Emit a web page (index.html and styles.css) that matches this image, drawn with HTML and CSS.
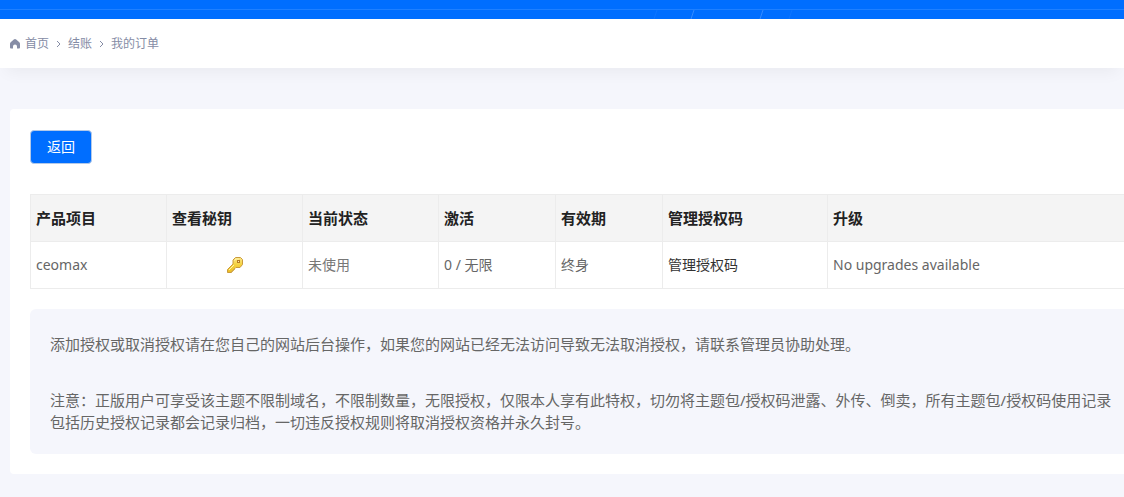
FILE: index.html
```html
<!DOCTYPE html>
<html lang="zh-CN">
<head>
<meta charset="utf-8">
<meta name="viewport" content="width=device-width, initial-scale=1">
<title>我的订单</title>
<link rel="stylesheet" href="styles.css">
</head>
<body>
<header class="banner">
  <svg class="banner-lines" width="160" height="9" viewBox="0 0 160 9" fill="none" stroke="#fff" aria-hidden="true">
    <path d="M17 0L14 9M152 0L149 9" stroke-opacity=".05"/>
    <path d="M54 0L51 9M123 0L120 9" stroke-opacity=".2"/>
  </svg>
</header>
<nav class="crumbs" aria-label="面包屑">
  <svg class="home" width="10" height="10" viewBox="0 0 10 10" aria-hidden="true"><path fill="currentColor" d="M5 0Q5.600 0 6.200.5L9.300 3.200Q10 3.900 10 4.800V8.500Q10 9.500 9 9.500H7V7.500A2 2 0 0 0 3 7.500V9.500H1Q0 9.500 0 8.500V4.800Q0 3.900.7 3.200L3.800.5Q4.400 0 5 0Z"/></svg>
  <a href="#">首页</a>
  <svg class="chevron" width="5" height="8" viewBox="0 0 5 8" aria-hidden="true"><path d="M1 1L4 4L1 7" fill="none" stroke="currentColor"/></svg>
  <a href="#">结账</a>
  <svg class="chevron" width="5" height="8" viewBox="0 0 5 8" aria-hidden="true"><path d="M1 1L4 4L1 7" fill="none" stroke="currentColor"/></svg>
  <span>我的订单</span>
</nav>
<main class="card">
  <button class="back" type="button">返回</button>
  <table class="licenses">
    <colgroup>
      <col class="col-main"><col class="col-main"><col class="col-main">
      <col class="col-count"><col class="col-term"><col class="col-code"><col>
    </colgroup>
    <thead>
      <tr><th>产品项目</th><th>查看秘钥</th><th>当前状态</th><th>激活</th><th>有效期</th><th>管理授权码</th><th>升级</th></tr>
    </thead>
    <tbody>
      <tr>
        <td>ceomax</td>
        <td class="key-cell">
          <a href="#" aria-label="查看秘钥"><svg class="key" width="16" height="16" viewBox="0 0 16 16" aria-hidden="true">
            <defs><linearGradient id="gold" x1="0" y1="0" x2="0" y2="1"><stop offset="0" stop-color="#fbe588"/><stop offset=".5" stop-color="#f4d03c"/><stop offset="1" stop-color="#edbd24"/></linearGradient></defs>
            <path d="M8.500.5H13.500L15.500 2.500V7.500L13 10.500H9L8 11.500H7.500V12.500H6.500V13.500H5.500V14.500H4.500V15.500H.5V12.500L6 7V3Z" fill="url(#gold)" stroke="#c99a3c"/>
            <path d="M2 13L7 8M7.500 3.500L9 2H12" fill="none" stroke="#fff3a8"/>
            <rect x="10.500" y="3.500" width="2" height="2" fill="#fff0ab" stroke="#b77b20"/>
          </svg></a>
        </td>
        <td class="muted">未使用</td>
        <td>0 / 无限</td>
        <td>终身</td>
        <td><a class="manage" href="#">管理授权码</a></td>
        <td>No upgrades available</td>
      </tr>
    </tbody>
  </table>
  <section class="notice">
    <p>添加授权或取消授权请在您自己的网站后台操作，如果您的网站已经无法访问导致无法取消授权，请联系管理员协助处理。</p>
    <p>注意：正版用户可享受该主题不限制域名，不限制数量，无限授权，仅限本人享有此特权，切勿将主题包/授权码泄露、外传、倒卖，所有主题包/授权码使用记录包括历史授权记录都会记录归档，一切违反授权规则将取消授权资格并永久封号。</p>
  </section>
</main>
</body>
</html>
```
FILE: styles.css
```css
* { box-sizing: border-box; }
body {
  margin: 0;
  background: #f5f6fc;
  color: #666;
  font-family: "Noto Sans", "Noto Sans CJK SC", sans-serif;
  font-size: 14px;
  line-height: 22px;
}
a { color: inherit; text-decoration: none; }
.banner {
  display: flex;
  justify-content: center;
  padding-top: 10px;
  padding-left: 316px;
  background: linear-gradient(#1f80ff, #1f80ff) 0 9px / 100% 1px no-repeat #006eff;
}
.banner-lines { display: block; }
.crumbs {
  display: flex;
  align-items: center;
  padding: 14px 10px 13px;
  background: #fff;
  color: #858ca5;
  font-size: 12px;
  box-shadow: 0 10px 16px -6px rgba(0, 0, 0, .05);
}
.home { margin-right: 5px; }
.chevron { margin: 0 7px; }
.card {
  margin: 41px 0 23px 10px;
  padding: 21px 0 20px 20px;
  background: #fff;
  border-radius: 4px 0 0 4px;
}
.back {
  display: block;
  padding: 5px 16px;
  border: 1px solid #b3c9e8;
  border-radius: 4px;
  background: #006eff;
  color: #fff;
  font: inherit;
}
.licenses {
  width: 100%;
  margin: 30px 0 20px;
  border-collapse: collapse;
  table-layout: fixed;
}
.col-main { width: 136px; }
.col-count { width: 117px; }
.col-term { width: 107px; }
.col-code { width: 165px; }
.licenses th, .licenses td {
  height: 47px;
  padding: 5px;
  border: 1px solid #ececec;
  border-right-width: 0;
  text-align: left;
}
.licenses th {
  background: #f4f4f4;
  color: #222;
  font-size: 15px;
  font-weight: 700;
}
.licenses .key-cell { text-align: center; }
.key { display: block; margin: 0 auto; }
.licenses .muted { color: #777; }
.manage { color: #333; }
.notice {
  padding: 24px 6px 21px 20px;
  border-radius: 6px 0 0 6px;
  background: #f5f6fc;
  font-size: 15px;
}
.notice p { margin: 0; }
.notice p + p { margin-top: 34px; }
```
